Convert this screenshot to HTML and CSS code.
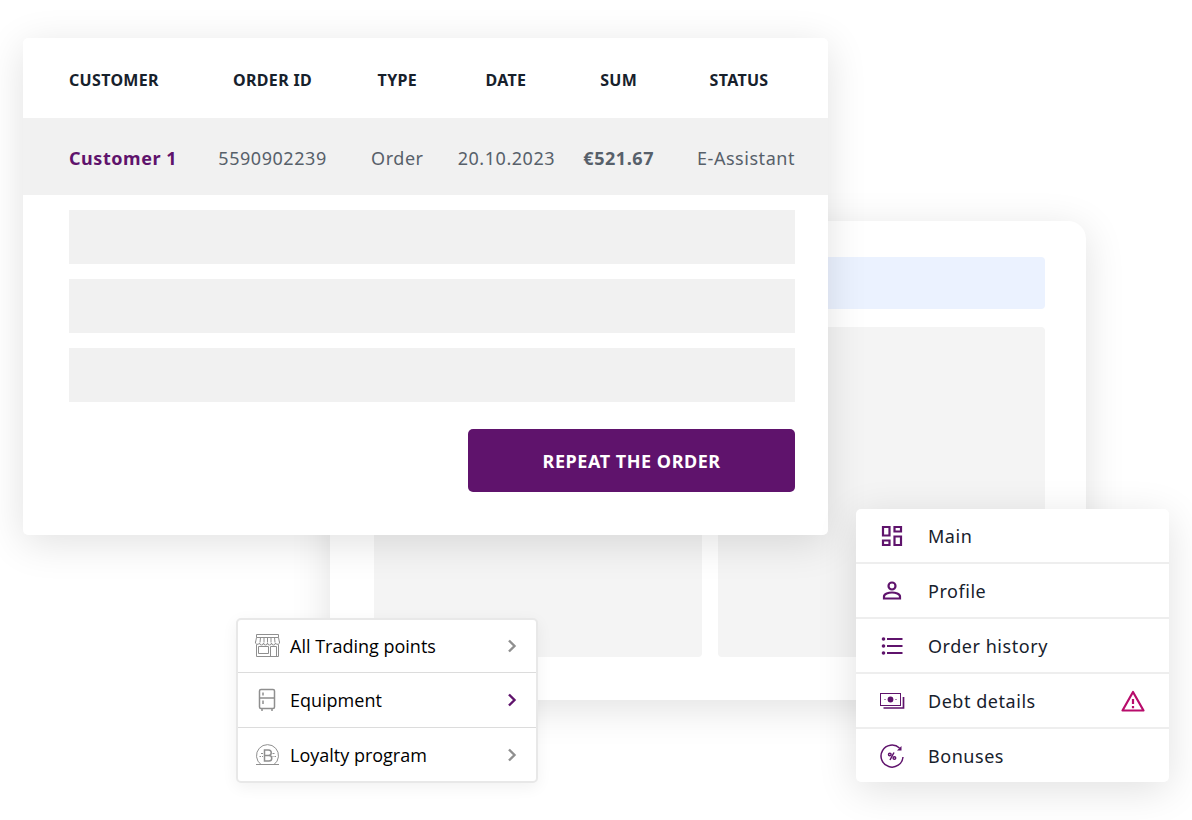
FILE: index.html
```html
<!DOCTYPE html>
<html lang="en">
<head>
    <meta charset="UTF-8">
    <meta name="viewport" content="width=device-width, initial-scale=1.0">
    <title>Orders</title>
    <link rel="stylesheet" href="styles.css">
</head>
<body>
<main class="stage">

    <!-- Back panel -->
    <div class="card panel">
        <div class="panel-bar"></div>
        <div class="panel-columns">
            <div class="panel-box"></div>
            <div class="panel-box"></div>
        </div>
    </div>

    <!-- Orders -->
    <section class="card orders">
        <table class="orders-table">
            <colgroup>
                <col class="col-customer">
                <col class="col-id">
                <col class="col-type">
                <col class="col-date">
                <col class="col-sum">
                <col class="col-status">
            </colgroup>
            <thead>
                <tr>
                    <th>CUSTOMER</th>
                    <th>ORDER ID</th>
                    <th>TYPE</th>
                    <th>DATE</th>
                    <th>SUM</th>
                    <th>STATUS</th>
                </tr>
            </thead>
            <tbody>
                <tr>
                    <td class="customer">Customer 1</td>
                    <td>5590902239</td>
                    <td>Order</td>
                    <td>20.10.2023</td>
                    <td class="sum">€521.67</td>
                    <td>E-Assistant</td>
                </tr>
            </tbody>
        </table>
        <div class="orders-body">
            <div class="row-empty"></div>
            <div class="row-empty"></div>
            <div class="row-empty"></div>
            <button type="button" class="btn">REPEAT THE ORDER</button>
        </div>
    </section>

    <!-- Categories -->
    <nav class="card categories">
        <a href="#">
            <svg class="icon" viewBox="0 0 26 26" fill="none" stroke="#8f8f8f" stroke-width="1">
                <path d="M2.500 1.500h22v3h-22zM2.500 4.500l-1 5M24.500 4.500l1 5M6.500 4.500l-.5 5M10 4.500v5M13.500 4.500v5M17 4.500v5M20.500 4.500l.5 5"/>
                <path d="M1.500 8.500a2 2 0 0 0 4 1.500 2 2 0 0 0 4 0 2 2 0 0 0 4 0 2 2 0 0 0 4 0 2 2 0 0 0 4 0 2 2 0 0 0 4-1.500M2.500 11.500v12h22v-12"/>
                <path d="M4.500 13.500h10v7h-10zM16.500 23.500v-10h6v10"/>
            </svg>
            <span>All Trading points</span>
            <svg class="arrow" viewBox="0 0 10 14"><path d="M2 1.500L7.500 7 2 12.500"/></svg>
        </a>
        <a href="#">
            <svg class="icon" viewBox="0 0 26 26" fill="none" stroke="#8f8f8f" stroke-width="1.500">
                <rect x="5.500" y="2.500" width="15" height="19" rx="1.500"/>
                <path d="M5.500 11h15M9 5.500v3M9 13.500v3.500M8 21.500v2.500M18 21.500v2.500"/>
            </svg>
            <span>Equipment</span>
            <svg class="arrow active" viewBox="0 0 10 14"><path d="M2 1.500L7.500 7 2 12.500"/></svg>
        </a>
        <a href="#">
            <svg class="icon" viewBox="0 0 26 26" fill="none" stroke="#8f8f8f" stroke-width="1">
                <path d="M2 22.500h23M7 22.500a11 11 0 1 1 13 0"/>
                <path d="M10.500 8h4a2.500 2.500 0 0 1 0 5.500h-4zM10.500 13.500h4.500a2.500 2.500 0 0 1 0 5.500h-4.500z" stroke-width="1.500"/>
                <path d="M7 11.500h2M5.500 14.500h1.500M8 14.500h1M18.500 11.500h2M18.500 14.500h1M20.500 14.500h1.500"/>
            </svg>
            <span>Loyalty program</span>
            <svg class="arrow" viewBox="0 0 10 14"><path d="M2 1.500L7.500 7 2 12.500"/></svg>
        </a>
    </nav>

    <!-- Main menu -->
    <nav class="card menu">
        <a href="#">
            <svg class="icon" viewBox="0 0 26 26" fill="none" stroke="#5f136c" stroke-width="2.200">
                <path d="M4 4h6.500v8.500H4zM15.500 4H22v4.500h-6.500zM4 17.500h6.500V22H4zM15.500 13.500H22V22h-6.500z"/>
            </svg>
            <span>Main</span>
        </a>
        <a href="#">
            <svg class="icon" viewBox="0 0 26 26" fill="none" stroke="#5f136c" stroke-width="2.200">
                <circle cx="13" cy="8" r="3.500"/>
                <path d="M5 20.500v-2c0-2.500 4.500-4 8-4s8 1.500 8 4v2z"/>
            </svg>
            <span>Profile</span>
        </a>
        <a href="#">
            <svg class="icon" viewBox="0 0 26 26" stroke="#5f136c" stroke-width="2.200">
                <path d="M8 6h15.500M8 13h15.500M8 20h15.500"/>
                <g fill="#5f136c" stroke="none"><circle cx="4.500" cy="6" r="1.800"/><circle cx="4.500" cy="13" r="1.800"/><circle cx="4.500" cy="20" r="1.800"/></g>
            </svg>
            <span>Order history</span>
        </a>
        <a href="#">
            <svg class="icon" viewBox="0 0 26 26" fill="none" stroke="#5f136c">
                <rect x="1.500" y="5.500" width="20" height="12"/>
                <path d="M24.500 9v11H4.500" stroke-width="1.700"/>
                <circle cx="11.500" cy="11.500" r="2.900" fill="#5f136c" stroke="none"/>
                <path d="M5.500 11.500h1M16.500 11.500h1"/>
            </svg>
            <span>Debt details</span>
            <svg class="alert" viewBox="0 0 24 24" fill="none" stroke="#b80c6b" stroke-width="2.200">
                <path d="M12 3L22.500 21.500h-21z" stroke-linejoin="round"/>
                <path d="M12 10v5M12 17v2.200"/>
            </svg>
        </a>
        <a href="#">
            <svg class="icon" viewBox="0 0 26 26" fill="none" stroke="#5f136c" stroke-width="1.500">
                <path d="M24 14A11 11 0 1 1 20.500 5"/>
                <path d="M22.500 3v4.500h-4.500z" fill="#5f136c" stroke="none"/>
                <path d="M15 9.500l-4 7.500"/>
                <circle cx="10.800" cy="11.500" r="1.300"/><circle cx="15.400" cy="15" r="1.300"/>
            </svg>
            <span>Bonuses</span>
        </a>
    </nav>

</main>
</body>
</html>
```
FILE: styles.css
```css
:root{
    --purple:#5f136c;
    --dark:#17212c;
    --line:#e8e8e8;
}

*{
    box-sizing:border-box;
}

body{
    margin:0;
    background-color:#fff;
    color:var(--dark);
    font-family:"Noto Sans", "Open Sans", sans-serif;
    font-size:18px;
}

/* all cards share one row and overlap across the columns */
.stage{
    display:grid;
    grid-template-columns:
        minmax(0,23fr) minmax(0,213fr) minmax(0,94fr) minmax(0,208fr) minmax(0,290fr)
        minmax(0,28fr) minmax(0,230fr) minmax(0,83fr) minmax(0,23fr);
    align-items:start;
    padding-bottom:38px;
}

.card{
    grid-row:1;
    background-color:#fff;
    border-radius:5px;
    box-shadow:0 8px 40px rgba(0,0,0,0.12);
}

/* Back panel */
.panel{
    grid-column:4 / 8;
    margin-top:221px;
    padding:36px 41px 43px 44px;
    border-radius:18px;
}

.panel-bar{
    height:52px;
    background-color:#ebf2ff;
    border-radius:4px;
}

.panel-columns{
    display:grid;
    grid-template-columns:1fr 1fr;
    gap:16px;
    margin-top:18px;
}

.panel-box{
    height:330px;
    background-color:#f4f4f4;
    border-radius:4px;
}

/* Orders */
.orders{
    grid-column:2 / 6;
    margin-top:38px;
    padding-bottom:43px;
}

.orders-table{
    width:100%;
    table-layout:fixed;
    border-collapse:collapse;
    letter-spacing:0.03em;
}

.col-customer{
    width:23%;
}

.col-id{
    width:16%;
}

.col-type{
    width:15%;
}

.col-date{
    width:12%;
}

.col-sum{
    width:16%;
}

.orders-table th{
    height:80px;
    padding:4px 0 0;
    font-size:16px;
    font-weight:700;
    letter-spacing:0.02em;
}

.orders-table td{
    height:77px;
    padding:3px 0 0;
    color:#57606a;
    background-color:#f1f1f1;
    text-align:center;
}

.orders-table th:first-child,
.orders-table td:first-child{
    padding-left:46px;
    text-align:left;
}

.orders-table th:last-child,
.orders-table td:last-child{
    padding-right:33px;
}

.orders-table td:last-child{
    text-align:right;
}

.orders-table .customer{
    color:var(--purple);
    font-weight:700;
}

.orders-table .sum{
    font-weight:700;
}

.orders-body{
    display:flex;
    flex-direction:column;
    gap:15px;
    padding:15px 33px 0 46px;
}

.row-empty{
    height:54px;
    background-color:#f1f1f1;
}

.btn{
    align-self:flex-end;
    width:45%;
    height:63px;
    margin-top:12px;
    border:0;
    border-radius:5px;
    background-color:var(--purple);
    color:#fff;
    font-family:inherit;
    font-size:18px;
    font-weight:700;
    letter-spacing:0.03em;
    cursor:pointer;
}

/* Menus */
.categories a,
.menu a{
    display:flex;
    align-items:center;
    color:inherit;
    text-decoration:none;
}

.categories a + a{
    border-top:1px solid #dcdcdc;
}

.menu a:not(:last-child){
    border-bottom:2px solid #eee;
}

.icon{
    flex:none;
    width:26px;
    height:26px;
}

.categories{
    grid-column:3 / 5;
    margin-top:618px;
    border:2px solid var(--line);
    box-shadow:0 4px 16px rgba(0,0,0,0.06);
    color:#000;
    font-family:"Open Sans", "Noto Sans", sans-serif;
}

.categories a{
    height:54px;
    gap:10px;
    padding:0 19px 0 16px;
}

.categories a:nth-child(2){
    height:55px;
}

.categories a:first-child{
    height:52px;
}

.arrow{
    width:10px;
    height:14px;
    margin-left:auto;
    fill:none;
    stroke:#8f8f8f;
    stroke-width:2.4;
}

.arrow.active{
    stroke:var(--purple);
}

.menu{
    grid-column:7 / 9;
    margin-top:509px;
    letter-spacing:0.03em;
}

.menu a{
    height:55px;
    gap:23px;
    padding:0 24px 0 23px;
}

.menu a:last-child{
    height:53px;
}

.alert{
    width:24px;
    height:24px;
    margin-left:auto;
}

.btn:hover,
.categories a:hover,
.menu a:hover{
    opacity:0.8;
}
```
